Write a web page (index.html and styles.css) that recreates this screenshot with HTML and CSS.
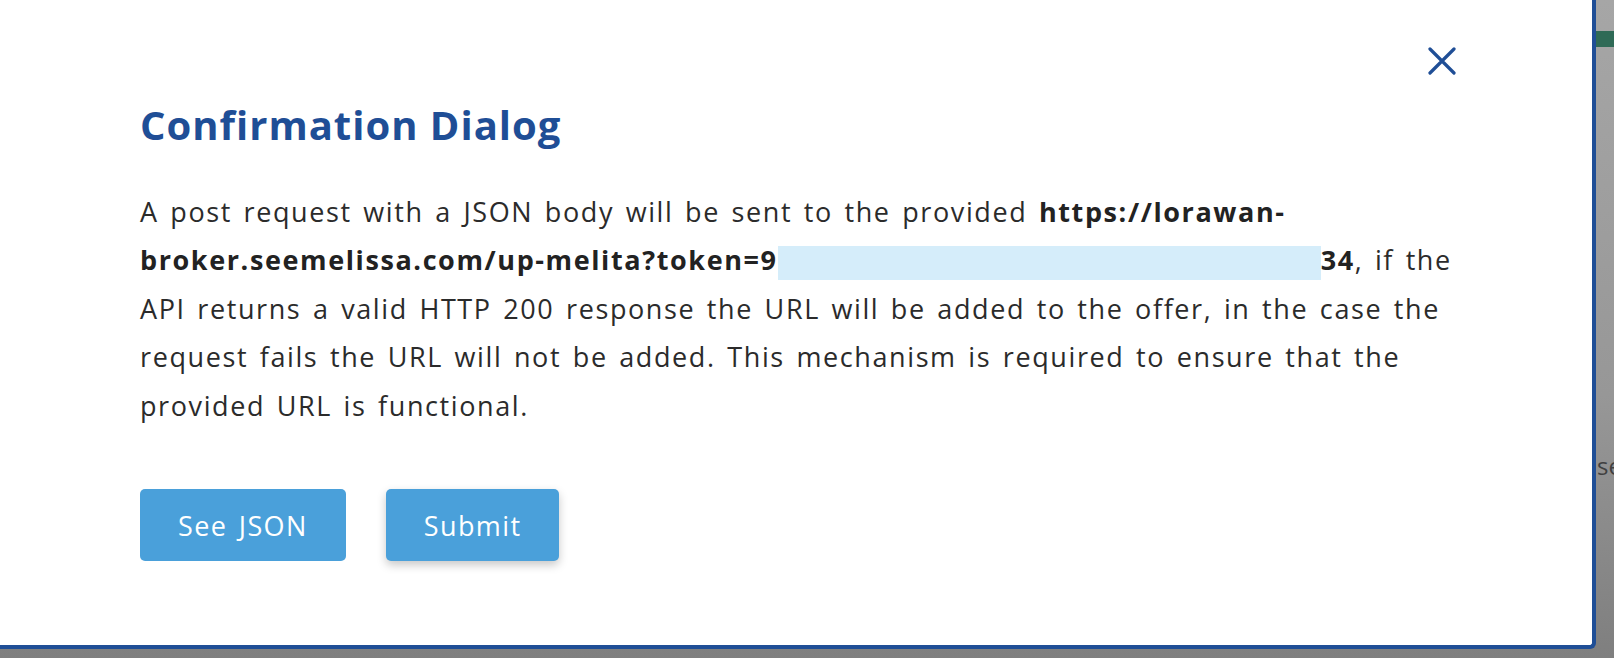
FILE: index.html
```html
<!DOCTYPE html>
<html lang="en">
<head>
<meta charset="utf-8">
<title>Confirmation Dialog</title>
<link rel="stylesheet" href="styles.css">
</head>
<body>
  <div class="behind-strip"></div>
  <div class="behind-text">se</div>
  <div class="modal" role="dialog" aria-labelledby="dlg-title">
    <div class="close-row">
      <button class="close" aria-label="Close">
        <svg width="28" height="28" viewBox="0 0 28 28" aria-hidden="true">
          <path d="M2 2 L26 26 M26 2 L2 26" stroke="#1f4e96" stroke-width="3.2" stroke-linecap="round" fill="none"/>
        </svg>
      </button>
    </div>
    <h2 class="title" id="dlg-title">Confirmation Dialog</h2>
    <p class="message">A post request with a JSON body will be sent to the provided <strong>https://lorawan-broker.seemelissa.com/up-melita?token=9<span class="redact"></span>34</strong>, if the API returns a valid HTTP 200 response the URL will be added to the offer, in the case the request fails the URL will not be added. This mechanism is required to ensure that the provided URL is functional.</p>
    <div class="actions">
      <button class="btn">See JSON</button>
      <button class="btn btn-raised">Submit</button>
    </div>
  </div>
</body>
</html>
```
FILE: styles.css
```css
html, body {
  margin: 0;
  padding: 0;
}
body {
  width: 1614px;
  height: 658px;
  overflow: hidden;
  position: relative;
  background: linear-gradient(180deg, #a6a6a6 0%, #979797 60%, #7f7f7f 100%);
  font-family: "Open Sans", "Noto Sans", sans-serif;
  font-variant-ligatures: none;
}
.behind-strip {
  position: absolute;
  left: 1596px;
  top: 31px;
  width: 18px;
  height: 16px;
  background: #2f6a56;
}
.behind-text {
  position: absolute;
  left: 1597px;
  top: 449px;
  font-family: "Open Sans", sans-serif;
  font-size: 24px;
  color: #404040;
}
.modal {
  position: relative;
  width: 1596px;
  height: 649px;
  box-sizing: border-box;
  background: #fff;
  border-right: 4px solid #1f4e96;
  border-bottom: 4px solid #1f4e96;
  border-bottom-right-radius: 6px;
  padding: 47px 136px 0 140px;
}
.close-row {
  display: flex;
  justify-content: flex-end;
  height: 27px;
}
.close {
  width: 28px;
  height: 28px;
  padding: 0;
  border: none;
  background: none;
  cursor: pointer;
}
.close svg {
  display: block;
}
.title {
  margin: 24px 0 0;
  font-size: 40px;
  line-height: 54px;
  font-weight: 700;
  letter-spacing: 1px;
  color: #1f4e96;
}
.message {
  margin: 36px 0 0;
  font-size: 27px;
  line-height: 48.4px;
  letter-spacing: 1.6px;
  word-spacing: 3px;
  color: #2b2b2b;
}
.message strong {
  font-weight: 700;
  color: #222;
}
.redact {
  display: inline-block;
  width: 543px;
  height: 34px;
  vertical-align: -10px;
  background: #d5edfa;
}
.actions {
  display: flex;
  gap: 40px;
  margin-top: 59px;
}
.btn {
  height: 72px;
  padding: 0 38px;
  border: none;
  border-radius: 5px;
  background: #4aa0da;
  color: #fff;
  font-family: inherit;
  font-size: 27px;
  letter-spacing: 1.4px;
  word-spacing: 3px;
  cursor: pointer;
}
.btn-raised {
  box-shadow: 0 4px 10px rgba(0, 0, 0, 0.22);
}
```
